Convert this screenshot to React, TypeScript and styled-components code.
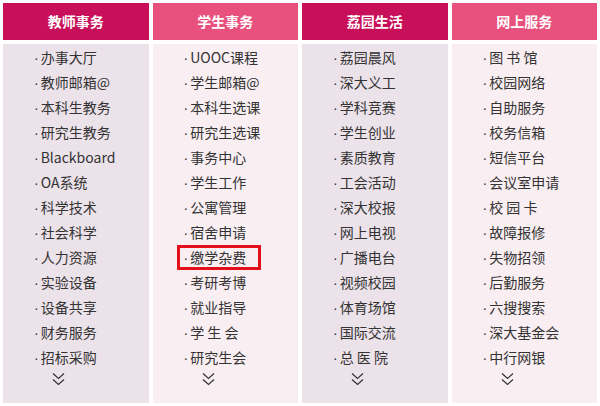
import styled, { createGlobalStyle } from "styled-components";

const GlobalStyle = createGlobalStyle`
  html, body {
    margin: 0;
    padding: 0;
    background: #fff;
  }
  body {
    font-family: "Microsoft YaHei", "Noto Sans CJK SC", "Noto Sans", sans-serif;
  }
`;

const Board = styled.div`
  width: 600px;
  height: 406px;
  box-sizing: border-box;
  padding: 3px;
  display: grid;
  grid-template-columns: repeat(4, 1fr);
  column-gap: 4px;
`;

const Column = styled.section`
  display: flex;
  flex-direction: column;
  gap: 4px;
  height: 400px;
`;

const Head = styled.h2<{ $alt: boolean }>`
  margin: 0;
  height: 37px;
  line-height: 37px;
  text-align: center;
  color: #fff;
  font-size: 14px;
  font-weight: bold;
  background: ${(p) => (p.$alt ? "#e8507e" : "#c8105a")};
`;

const Body = styled.div<{ $alt: boolean }>`
  flex: 1;
  background: ${(p) => (p.$alt ? "#f9eef2" : "#ece2ea")};
  padding: 1px 0 0 24px;
`;

const List = styled.ul`
  list-style: none;
  margin: 0;
  padding: 0;
`;

const Item = styled.li`
  height: 25px;
  display: flex;
  align-items: center;
`;

const Link = styled.a<{ $hot?: boolean }>`
  display: inline-block;
  box-sizing: border-box;
  min-width: 84px;
  height: 25px;
  line-height: 18px;
  padding: 0 3px 0 4px;
  border: 3px solid ${(p) => (p.$hot ? "#e3101c" : "transparent")};
  color: #333;
  font-size: 14px;
  text-decoration: none;
  white-space: pre;
`;

const Dot = styled.span`
  font-family: "Liberation Sans", Arial, sans-serif;
  font-size: 14px;
  margin-right: 2px;
`;

const More = styled.div`
  padding: 2px 0 0 25px;
  height: 14px;
  display: flex;
`;

const columns = [
  {
    title: "教师事务",
    items: ["办事大厅", "教师邮箱@", "本科生教务", "研究生教务", "Blackboard", "OA系统", "科学技术", "社会科学", "人力资源", "实验设备", "设备共享", "财务服务", "招标采购"],
  },
  {
    title: "学生事务",
    items: ["UOOC课程", "学生邮箱@", "本科生选课", "研究生选课", "事务中心", "学生工作", "公寓管理", "宿舍申请", "缴学杂费", "考研考博", "就业指导", "学 生 会", "研究生会"],
  },
  {
    title: "荔园生活",
    items: ["荔园晨风", "深大义工", "学科竞赛", "学生创业", "素质教育", "工会活动", "深大校报", "网上电视", "广播电台", "视频校园", "体育场馆", "国际交流", "总 医 院"],
  },
  {
    title: "网上服务",
    items: ["图 书 馆", "校园网络", "自助服务", "校务信箱", "短信平台", "会议室申请", "校 园 卡", "故障报修", "失物招领", "后勤服务", "六搜搜索", "深大基金会", "中行网银"],
  },
];

function Chevrons() {
  return (
    <svg width="13" height="14" viewBox="0 0 13 14">
      <path d="M1 1.5 L6.5 6.5 L12 1.5 M1 7.5 L6.5 12.5 L12 7.5" fill="none" stroke="#333" strokeWidth="1.2" />
    </svg>
  );
}

export default function App() {
  return (
    <>
      <GlobalStyle />
      <Board>
        {columns.map((col, i) => (
          <Column key={col.title}>
            <Head $alt={i % 2 === 1}>{col.title}</Head>
            <Body $alt={i % 2 === 1}>
              <List>
                {col.items.map((it) => (
                  <Item key={it}>
                    <Link href="#" $hot={it === "缴学杂费"}>
                      <Dot>·</Dot>
                      {it}
                    </Link>
                  </Item>
                ))}
              </List>
              <More>
                <Chevrons />
              </More>
            </Body>
          </Column>
        ))}
      </Board>
    </>
  );
}
